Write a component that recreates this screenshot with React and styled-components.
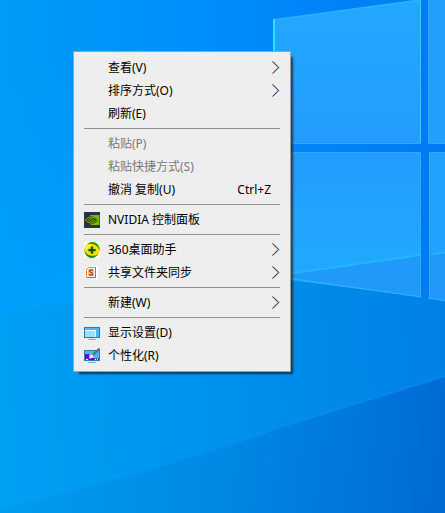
import styled, { createGlobalStyle } from 'styled-components';

const GlobalStyle = createGlobalStyle`
    * {
        box-sizing: border-box;
    }
    body {
        margin: 0;
        background: #0090f5;
    }
`;

const Desktop = styled.main`
    position: relative;
    min-height: 100vh;
    overflow: hidden;
    font-family: 'Noto Sans', 'Noto Sans CJK SC', sans-serif;
`;

const WallpaperSvg = styled.svg`
    position: absolute;
    inset: 0;
    width: 100%;
    height: 100%;
`;

const Menu = styled.div`
    position: absolute;
    left: 73px;
    top: 51px;
    min-width: 218px;
    padding: 4px 0;
    background: #eee;
    border: 1px solid #a0a0a0;
    box-shadow: 4px 4px 2px -2px rgba(0, 0, 0, 0.6);
`;

const Item = styled.button`
    display: flex;
    align-items: center;
    width: 100%;
    height: 23px;
    padding: 0 10px;
    border: 0;
    background: transparent;
    color: #000;
    font-family: inherit;
    font-size: 12px;
    line-height: 16px;
    text-align: left;
    white-space: nowrap;
    &:disabled {
        color: #7a7a7a;
    }
`;

const IconSlot = styled.span`
    display: flex;
    width: 16px;
    height: 16px;
    margin-right: 8px;
`;

const Label = styled.span`
    flex: 1;
`;

const Shortcut = styled.span`
    margin-right: 9px;
`;

const Separator = styled.hr`
    height: 1px;
    margin: 3px 10px;
    border: 0;
    background: #919191;
`;

const Wallpaper = () => (
    <WallpaperSvg viewBox="0 0 445 513" preserveAspectRatio="none" aria-hidden="true">
        <defs>
            <linearGradient id="sky" x1="0" y1="0" x2="1" y2="0">
                <stop offset="0" stopColor="#009cf7" />
                <stop offset="0.45" stopColor="#008ffc" />
                <stop offset="1" stopColor="#007af2" />
            </linearGradient>
            <linearGradient id="glow" x1="0" y1="0" x2="0" y2="1">
                <stop offset="0.2" stopColor="#00a2ff" stopOpacity="0" />
                <stop offset="1" stopColor="#00a2ff" stopOpacity="0.7" />
            </linearGradient>
            <linearGradient id="floor" gradientUnits="userSpaceOnUse" x1="0" y1="360" x2="445" y2="330">
                <stop offset="0" stopColor="#00a0f5" />
                <stop offset="0.5" stopColor="#0092ec" />
                <stop offset="1" stopColor="#0080e6" />
            </linearGradient>
            <linearGradient id="shade" gradientUnits="userSpaceOnUse" x1="0" y1="440" x2="445" y2="500">
                <stop offset="0" stopColor="#009df0" />
                <stop offset="0.5" stopColor="#0089e5" />
                <stop offset="1" stopColor="#0069d4" />
            </linearGradient>
            <linearGradient id="pane" x1="0" y1="0" x2="0" y2="1">
                <stop offset="0" stopColor="#22a8ff" />
                <stop offset="1" stopColor="#229cff" />
            </linearGradient>
            <linearGradient id="paneLow" x1="0" y1="0" x2="0" y2="1">
                <stop offset="0" stopColor="#229cff" />
                <stop offset="0.75" stopColor="#20a8ff" />
            </linearGradient>
            <linearGradient id="ray" x1="0" y1="0" x2="1" y2="0">
                <stop offset="0" stopColor="#009aee" />
                <stop offset="1" stopColor="#0a88f2" />
            </linearGradient>
        </defs>
        <rect width="445" height="513" fill="url(#sky)" />
        <path d="M0 0H260V275L0 314Z" fill="url(#glow)" />
        <path d="M0 313L290 273L445 300V513H0Z" fill="url(#floor)" />
        <path d="M0 510Q130 480 290 425L445 377V513H0Z" fill="url(#shade)" />
        <path d="M0 509Q130 479 290 424L445 376" fill="none" stroke="url(#ray)" />

        <path d="M274 19L421 -1V144H274Z" fill="url(#pane)" />
        <path d="M428 -2H446V144H428Z" fill="#219fff" />
        <path d="M274 152H421V297L274 278Z" fill="url(#paneLow)" />
        <path d="M429 152H446V301L429 298Z" fill="#22a2ff" />
        <path d="M288 274L421 255V297L288 278Z" fill="#2199fa" />
        <path d="M429 254L446 251V301L429 298Z" fill="#2199fa" />
        <path d="M274 20L421 0" stroke="#31b4ff" />
        <path d="M274 19V60" stroke="#20e8ff" strokeWidth="2" />
        <path d="M420.500 0V143" stroke="#42c4ff" />
        <path d="M290 143.500H420M290 152.500H420.500V296" fill="none" stroke="#30a9ff" />
        <path d="M428.500 0V143.500H446M446 152.500H429.500V298" fill="none" stroke="#30a9ff" />
        <path d="M288 274L421 255M432 254L446 252" stroke="#25b4ff" strokeWidth="2" />
        <path d="M288 278L421 297L446 301" fill="none" stroke="#2bb4ff" />
        <path d="M421 290H428V300H421Z" fill="#0082ea" />
    </WallpaperSvg>
);

const Arrow = () => (
    <svg width="9" height="14" viewBox="0 0 9 14" fill="none" aria-hidden="true">
        <path d="M1 0.5L7 6.5L1 12.5" stroke="#f0984a" />
        <path d="M2 0.5L8 6.5L2 12.5" stroke="#2f8fee" />
        <path d="M1.5 0.5L7.5 6.5L1.5 12.5" stroke="#40184c" strokeWidth="0.7" />
    </svg>
);

const NvidiaIcon = () => (
    <svg width="16" height="16" viewBox="0 0 16 16" aria-hidden="true">
        <rect width="16" height="16" fill="#2b3540" />
        <path d="M6 3H15.5V13H7Z" fill="#76b900" />
        <path d="M1 8Q4.500 3.500 9 4.500Q12 5.500 14 8.500Q10 12.500 7 12Q3.500 11.500 1 8Z" fill="#26351c" />
        <g fill="none" stroke="#76b900">
            <path d="M1.500 8Q5 3.800 9 5.200Q11.500 6 13 8.500Q9.500 11.800 7 11.200Q4 10.800 1.500 8Z" />
            <path d="M4.200 8Q6 5.800 8.500 6.800L10.500 8.500Q8.500 10 6.800 9.600Q5 9.200 4.200 8Z" strokeWidth="0.8" />
        </g>
        <path d="M6.500 7.500L8.500 8.500" stroke="#76b900" />
    </svg>
);

const AssistantIcon = () => (
    <svg width="16" height="16" viewBox="0 0 16 16" aria-hidden="true">
        <rect width="16" height="16" fill="#fff" />
        <circle cx="8" cy="8" r="7.800" fill="#ffe100" />
        <path d="M3 2Q7 -1.500 12 1Q16 3.500 15.800 9Q14 4 10 2.600Q6 1.300 3 2Z" fill="#2d9c1e" />
        <path d="M0.200 8Q2 12.500 7 13.700Q11 14.400 14.500 12Q10 17.500 4.500 15.200Q0.500 13 0.200 8Z" fill="#1c8a1c" />
        <path d="M2 4.500Q5 2 9 3.200Q5 3.800 2 7.500Z" fill="#fff68a" />
        <path d="M6.800 4.500H9.200V6.900H11.600V9.300H9.200V11.700H6.800V9.300H4.400V6.900H6.800Z" fill="#075c18" />
    </svg>
);

const SyncIcon = () => (
    <svg width="16" height="16" viewBox="0 0 16 16" aria-hidden="true">
        <rect x="1" y="1" width="13" height="13" fill="#fff" />
        <path d="M4.500 2.500H11.500V12.500H2.500V4.500Z" fill="#fff" stroke="#e98a3c" />
        <path d="M11.500 2.500V12.500H3" fill="none" stroke="#d9640f" />
        <rect x="4" y="4" width="6" height="7" fill="#fbc48c" />
        <path d="M9 5H6.200Q4.600 6.300 6.500 7.200Q9.500 8 8 10H5" fill="none" stroke="#c44305" strokeWidth="1.300" />
    </svg>
);

const DisplayIcon = () => (
    <svg width="16" height="16" viewBox="0 0 16 16" aria-hidden="true">
        <rect x="0.500" y="2.500" width="15" height="10" fill="#49b9f5" stroke="#35799f" />
        <path d="M1 5H12V12H1Z" fill="#9eddfc" />
        <path d="M1 5.500H11.500V12" fill="none" stroke="#e9f8ff" />
        <path d="M6 13H10V14H6Z" fill="#d5dadd" />
        <path d="M4 14H12V15H4Z" fill="#9aaab8" />
    </svg>
);

const PersonalizeIcon = () => (
    <svg width="16" height="16" viewBox="0 0 16 16" aria-hidden="true">
        <rect x="0.500" y="2.500" width="15" height="10" fill="#49b9f5" stroke="#35799f" />
        <path d="M1 6H5V10H10V12H1Z" fill="#6200f0" />
        <path d="M10 10.500H15V12H10Z" fill="#3a2ca8" />
        <path d="M2 11.500H4M11 11.500H12M13 11.500H14" stroke="#fff" />
        <path d="M4.500 10.500Q6 10 6 8Q7.500 5.500 9.500 7.500Q10 10.500 4.500 10.500Z" fill="#f0f1f0" />
        <path d="M8.800 7.200L15.500 0.500" stroke="#5d6b77" strokeWidth="2" />
        <path d="M6 13H10V14H6Z" fill="#d5dadd" />
        <path d="M4 14H12V15H4Z" fill="#9aaab8" />
    </svg>
);

const groups = [
    [
        { label: '查看(V)', submenu: true },
        { label: '排序方式(O)', submenu: true },
        { label: '刷新(E)' },
    ],
    [
        { label: '粘贴(P)', disabled: true },
        { label: '粘贴快捷方式(S)', disabled: true },
        { label: '撤消 复制(U)', shortcut: 'Ctrl+Z' },
    ],
    [{ label: 'NVIDIA 控制面板', icon: <NvidiaIcon /> }],
    [
        { label: '360桌面助手', icon: <AssistantIcon />, submenu: true },
        { label: '共享文件夹同步', icon: <SyncIcon />, submenu: true },
    ],
    [{ label: '新建(W)', submenu: true }],
    [
        { label: '显示设置(D)', icon: <DisplayIcon /> },
        { label: '个性化(R)', icon: <PersonalizeIcon /> },
    ],
];

const MenuGroup = ({ items, first }) => (
    <>
        {!first && <Separator />}
        {items.map(({ label, icon, shortcut, submenu, disabled }) => (
            <Item
                key={label}
                type="button"
                role="menuitem"
                disabled={disabled}
                aria-haspopup={submenu ? 'menu' : undefined}
            >
                <IconSlot>{icon}</IconSlot>
                <Label>{label}</Label>
                {shortcut && <Shortcut>{shortcut}</Shortcut>}
                {submenu && <Arrow />}
            </Item>
        ))}
    </>
);

const App = () => (
    <>
        <GlobalStyle />
        <Desktop>
            <Wallpaper />
            <Menu role="menu">
                {groups.map((items, i) => (
                    <MenuGroup key={items[0].label} items={items} first={i === 0} />
                ))}
            </Menu>
        </Desktop>
    </>
);

export default App;
